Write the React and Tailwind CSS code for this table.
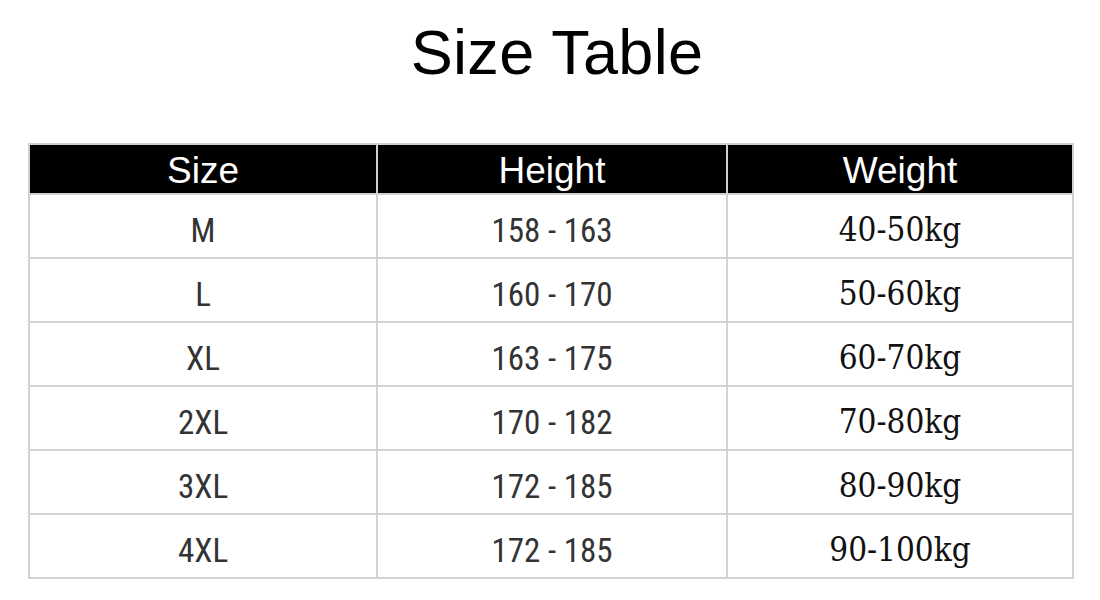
const rows = [
  { size: "M", height: "158 - 163", weight: "40-50kg" },
  { size: "L", height: "160 - 170", weight: "50-60kg" },
  { size: "XL", height: "163 - 175", weight: "60-70kg" },
  { size: "2XL", height: "170 - 182", weight: "70-80kg" },
  { size: "3XL", height: "172 - 185", weight: "80-90kg" },
  { size: "4XL", height: "172 - 185", weight: "90-100kg" },
]

const narrow = "font-['Liberation_Sans_Narrow','Roboto_Condensed',Roboto,sans-serif]"

export default function App() {
  return (
    <div className="w-[1100px] h-[600px] bg-white pt-[21px] font-['Liberation_Sans',Arial,sans-serif]">
      <h1 className="pl-[14px] text-center text-[63px] leading-none tracking-[0.3px] text-black">Size Table</h1>

      <table className="mt-[59px] ml-[28px] w-[1044px] border-collapse table-fixed">
        <thead>
          <tr className="bg-black text-white">
            <th className="w-[348px] h-[50px] p-0 border-2 border-[#cfcfcf] text-[37px] leading-none font-normal pt-[2px]">Size</th>
            <th className="w-[350px] h-[50px] p-0 border-2 border-[#cfcfcf] text-[37px] leading-none font-normal pt-[2px]">Height</th>
            <th className="w-[346px] h-[50px] p-0 border-2 border-[#cfcfcf] text-[37px] leading-none font-normal pt-[2px]">Weight</th>
          </tr>
        </thead>
        <tbody>
          {rows.map((r) => (
            <tr key={r.size}>
              <td className={`h-[64px] p-0 border-2 border-[#d2d2d2] text-center text-[33px] leading-none pt-[8px] text-[#333] ${narrow}`}>
                {r.size}
              </td>
              <td className={`h-[64px] p-0 border-2 border-[#d2d2d2] text-center text-[33px] leading-none pt-[8px] text-[#333] ${narrow}`}>
                {r.height}
              </td>
              <td className="h-[64px] p-0 border-2 border-[#d2d2d2] text-center text-[33px] leading-none pt-[6px] font-['DejaVu_Serif_Condensed','DejaVu_Serif',serif] text-[#111]">
                {r.weight}
              </td>
            </tr>
          ))}
        </tbody>
      </table>
    </div>
  )
}
